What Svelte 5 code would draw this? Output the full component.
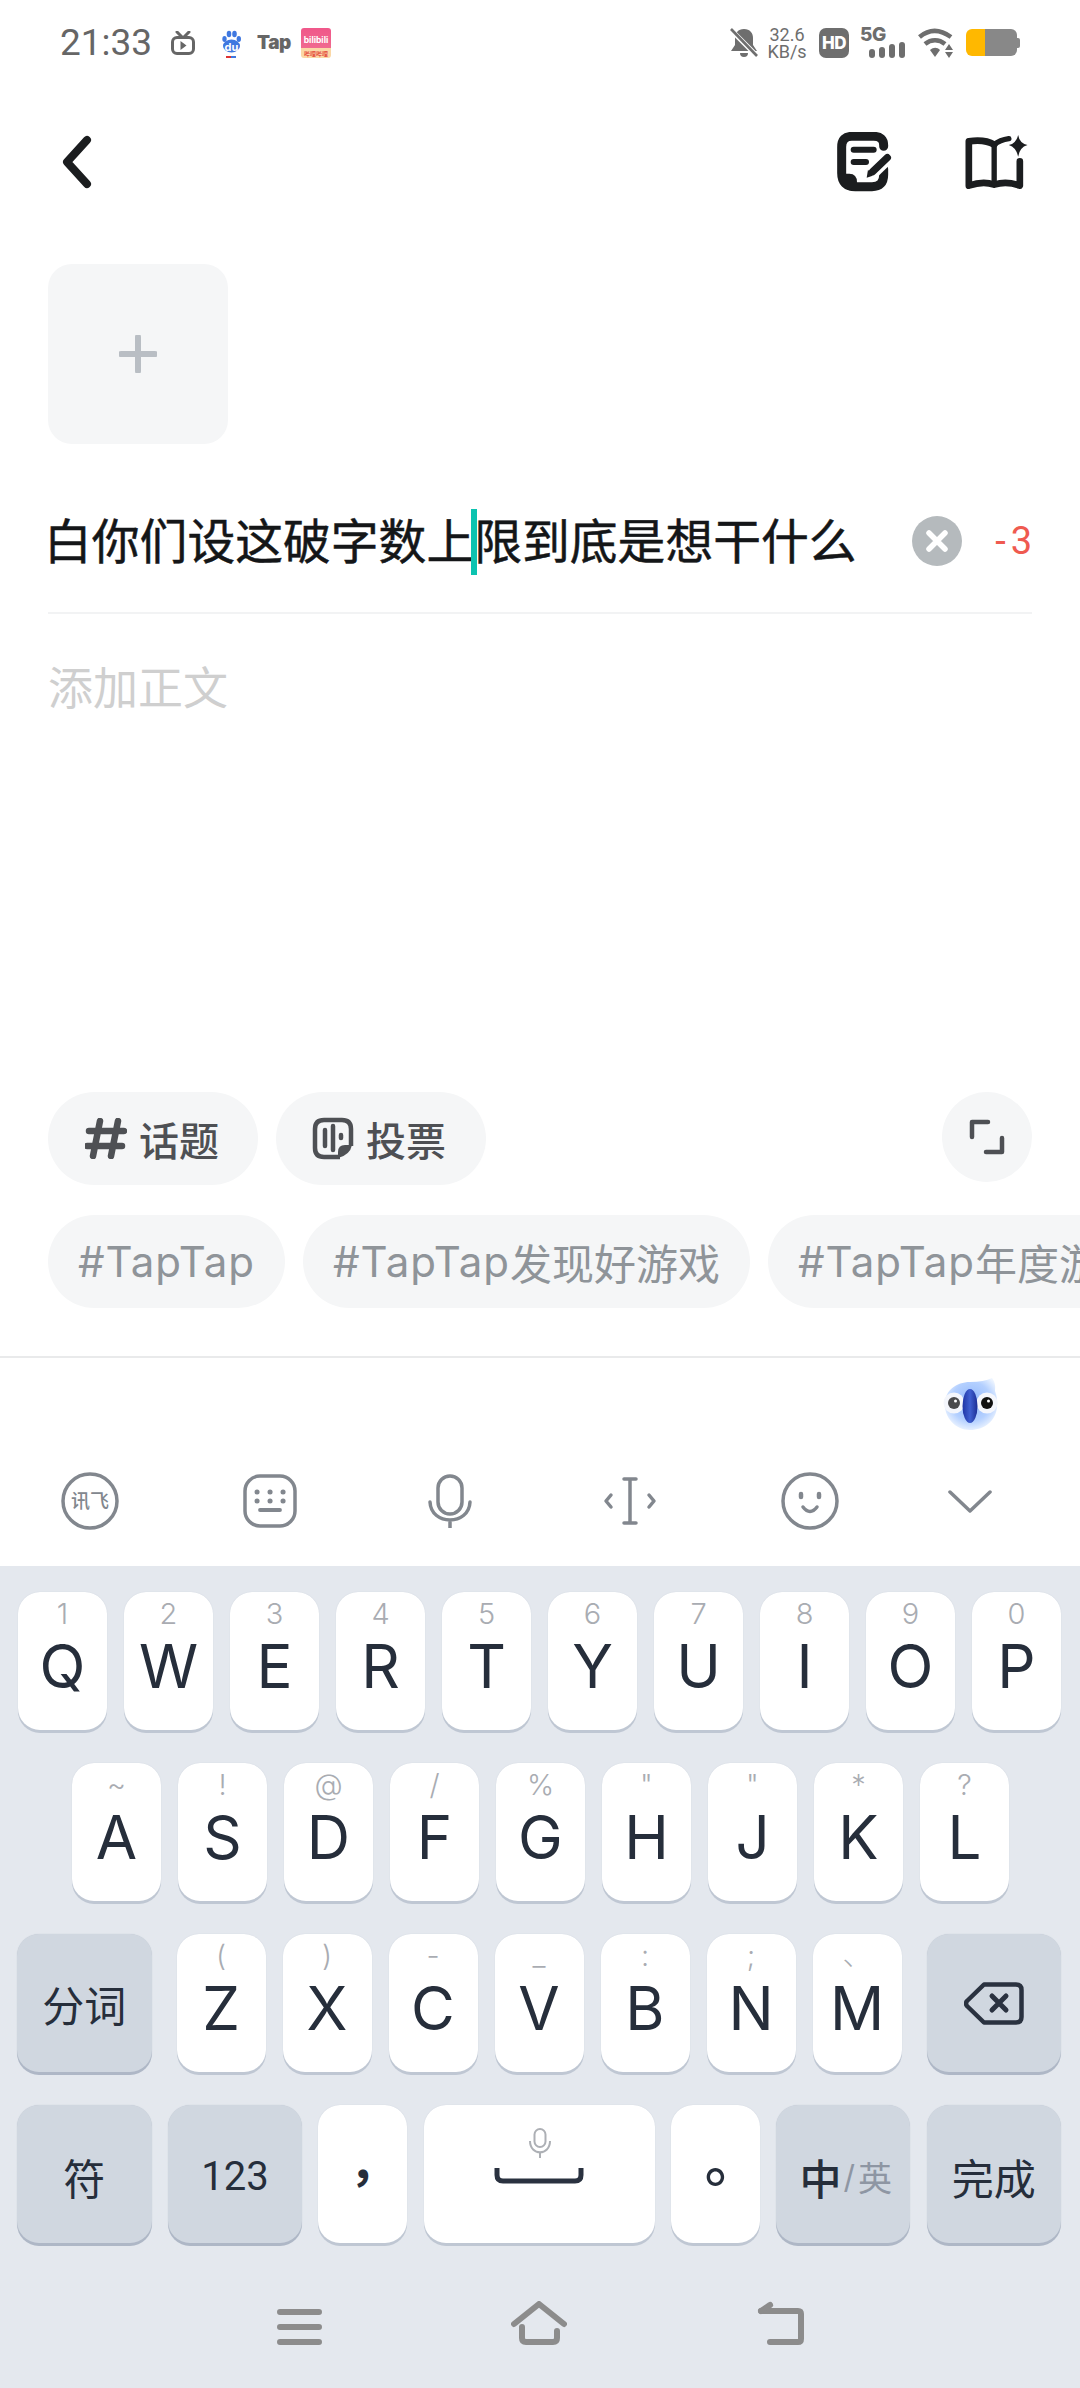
<script>
  const row1 = [['Q','1'],['W','2'],['E','3'],['R','4'],['T','5'],['Y','6'],['U','7'],['I','8'],['O','9'],['P','0']];
  const row2 = [['A','~'],['S','!'],['D','@'],['F','/'],['G','%'],['H','"'],['J','"'],['K','*'],['L','?']];
  const row3 = [['Z','('],['X',')'],['C','-'],['V','_'],['B',':'],['N',';'],['M','、']];
  const tags = ['', '发现好游戏', '年度游戏'];
</script>

<div class="page">
  <div class="status">
    <span class="time">21:33</span>
    <svg class="s-tv" viewBox="0 0 24 24" width="24" height="24">
      <path d="M6 1l5 5M18 1l-5 5" stroke="#666" stroke-width="3" stroke-linecap="round"/>
      <rect x="1.5" y="6.5" width="21" height="16" rx="4.5" fill="none" stroke="#666" stroke-width="3"/>
      <path d="M9.5 10l6 4.5-6 4.5z" fill="#666"/>
    </svg>
    <span class="s-baidu">
      <svg viewBox="0 0 19 28" width="19" height="28">
        <ellipse cx="9.5" cy="16" rx="8.5" ry="6.5" fill="#3f78e0"/>
        <ellipse cx="2.5" cy="9" rx="2.2" ry="3" fill="#3f78e0"/>
        <ellipse cx="7" cy="4" rx="2.3" ry="3.2" fill="#3f78e0"/>
        <ellipse cx="12.5" cy="4" rx="2.3" ry="3.2" fill="#3f78e0"/>
        <ellipse cx="16.8" cy="9" rx="2.2" ry="3" fill="#3f78e0"/>
        <rect x="4" y="26" width="5" height="2" fill="#d33"/>
        <rect x="9" y="26" width="5" height="2" fill="#3f78e0"/>
      </svg>
      <span class="du">du</span>
    </span>
    <span class="s-tap">Tap</span>
    <span class="s-bili"><span class="bili-t">bilibili</span><span class="bili-b">哔哩哔哩</span></span>
    <span class="grow"></span>
    <svg class="s-bell" viewBox="0 0 28 30" width="28" height="30">
      <path d="M14 1c-6 0-9 4-9 9v7l-4 6h26l-4-6v-7c0-5-3-9-9-9zM10 25a4 4 0 0 0 8 0z" fill="#6e6e6e"/>
      <path d="M0 1L28 29" stroke="#fff" stroke-width="5"/>
      <path d="M1 1L27 28" stroke="#6e6e6e" stroke-width="2.6"/>
    </svg>
    <span class="speed"><span>32.6</span><span>KB/s</span></span>
    <span class="hd">HD</span>
    <span class="net">
      <span class="fiveg">5G</span>
      <svg viewBox="0 0 36 16" width="36" height="16">
        <rect x="0" y="7" width="6" height="9" rx="3" fill="#6e6e6e"/>
        <rect x="10" y="5" width="6" height="11" rx="3" fill="#6e6e6e"/>
        <rect x="20" y="2" width="6" height="14" rx="3" fill="#6e6e6e"/>
        <rect x="30" y="0" width="6" height="16" rx="3" fill="#6e6e6e"/>
      </svg>
    </span>
    <svg class="s-wifi" viewBox="0 0 37 30" width="37" height="30">
      <path d="M1.5 9C11 1 22 1 33 9" fill="none" stroke="#6e6e6e" stroke-width="4.5"/>
      <path d="M7 16c6-5 14-5 20 0" fill="none" stroke="#6e6e6e" stroke-width="4.5"/>
      <path d="M12 22c3.500-3 7-3 10 0l-5 7z" fill="#6e6e6e"/>
      <path d="M27 22h8l-4-6zM27 24h8l-4 6z" fill="#6e6e6e"/>
    </svg>
    <span class="batt"><span class="batt-fill"></span><span class="batt-rest"></span><span class="batt-nub"></span></span>
  </div>

  <div class="nav">
    <svg viewBox="0 0 30 54" width="30" height="54">
      <path d="M25 5L5 27L25 49" fill="none" stroke="#1b1d1f" stroke-width="8" stroke-linecap="round" stroke-linejoin="round"/>
    </svg>
    <span class="grow"></span>
    <svg viewBox="595 397 165 180" width="55" height="60">
      <path d="M735 440V437Q735 410 705 410H640Q609 410 609 442V520Q609 561 650 561H700Q735 561 735 525V508" fill="none" stroke="#1b1d1f" stroke-width="27" stroke-linecap="round"/>
      <path d="M600 522H632Q655 522 655 548V572H632Q600 560 600 525z" fill="#1b1d1f"/>
      <path d="M645 450H705M645 487H682" stroke="#1b1d1f" stroke-width="18" stroke-linecap="round"/>
      <path d="M748 472L700 518" stroke="#fff" stroke-width="42"/>
      <path d="M746 474L702 516" stroke="#1b1d1f" stroke-width="22" stroke-linecap="round"/>
      <path d="M688 510l14 18-18 6z" fill="#1b1d1f"/>
    </svg>
    <svg class="book" viewBox="982 403 186 165" width="63" height="55">
      <path d="M1068 432Q1040 415 992 422V555Q1035 540 1068 552Q1105 540 1145 555V482" fill="none" stroke="#1b1d1f" stroke-width="20" stroke-linejoin="round" stroke-linecap="round"/>
      <path d="M1068 432V550M1068 432Q1085 418 1112 414" fill="none" stroke="#1b1d1f" stroke-width="16" stroke-linecap="round"/>
      <path d="M1140 403Q1144 428 1168 433Q1144 440 1140 468Q1134 440 1112 433Q1134 428 1140 403z" fill="#1b1d1f"/>
    </svg>
  </div>

  <div class="add">
    <svg viewBox="0 0 38 38" width="38" height="38"><path d="M19 2V36M2 19H36" stroke="#b9bec4" stroke-width="6" stroke-linecap="round"/></svg>
  </div>

  <div class="title-row">
    <span class="title">白你们设这破字数上<span class="caret"></span>限到底是想干什么</span>
    <span class="grow"></span>
    <svg class="clear" viewBox="0 0 50 50" width="50" height="50">
      <circle cx="25" cy="25" r="25" fill="#b5babd"/>
      <path d="M17 17L33 33M33 17L17 33" stroke="#fff" stroke-width="5.500" stroke-linecap="round"/>
    </svg>
    <span class="count">-3</span>
  </div>

  <div class="placeholder">添加正文</div>
  <div class="grow"></div>

  <div class="pills">
    <span class="pill p1">
      <svg viewBox="0 0 42 41" width="42" height="41"><path d="M15 3L8 38M33 3L26 38M4 13H39M2 28H37" stroke="#4e5054" stroke-width="6.500" stroke-linecap="round"/></svg>
      话题
    </span>
    <span class="pill p2">
      <svg viewBox="0 0 42 43" width="42" height="43">
        <path d="M28 40H12Q3 40 3 31V12Q3 3 12 3H30Q39 3 39 12V29" fill="none" stroke="#4e5054" stroke-width="4.500"/>
        <path d="M26 41V35Q26 28 33 28H40Q38 38 26 41z" fill="#4e5054"/>
        <path d="M13 13V29M21 9V33M29 18V21" stroke="#4e5054" stroke-width="4.500" stroke-linecap="round"/>
      </svg>
      投票
    </span>
    <span class="grow"></span>
    <span class="expand">
      <svg viewBox="0 0 36 36" width="36" height="36">
        <path d="M3 18V3H19M33 19V33H17" fill="none" stroke="#4e5054" stroke-width="4.500" stroke-linecap="round" stroke-linejoin="round"/>
      </svg>
    </span>
  </div>

  <div class="tags">
    {#each tags as t}<span class="tag"><span class="lat">#TapTap</span>{t}</span>{/each}
  </div>

  <div class="toolbar">
    <svg class="bird" viewBox="0 0 56 54" width="56" height="54">
      <defs>
        <radialGradient id="bd" cx="50%" cy="45%" r="58%"><stop offset="0" stop-color="#8fb6fb"/><stop offset="0.65" stop-color="#b4d0ff"/><stop offset="1" stop-color="#eef5ff"/></radialGradient>
        <linearGradient id="bk" x1="0" x2="1" y1="0" y2="0"><stop offset="0" stop-color="#1f35a5"/><stop offset="0.5" stop-color="#3f5fd0"/><stop offset="1" stop-color="#1c2e95"/></linearGradient>
      </defs>
      <path d="M3 26C3 14 14 5 28 5Q42 5 50 1Q54 6 53 14Q56 22 55 30C54 44 42 53 28 53C13 53 2 40 3 26z" fill="url(#bd)"/>
      <circle cx="12" cy="26" r="10.500" fill="#f4f6fc"/>
      <circle cx="45" cy="26" r="10.500" fill="#f4f6fc"/>
      <circle cx="12" cy="26" r="6" fill="#4a4a4c"/>
      <circle cx="45" cy="26" r="6" fill="#111"/>
      <circle cx="13.500" cy="24" r="1.500" fill="#fff"/>
      <circle cx="46.500" cy="24" r="1.500" fill="#fff"/>
      <ellipse cx="28" cy="29" rx="7.500" ry="17" fill="url(#bk)"/>
    </svg>
    <div class="tool-row">
      <span class="tool">
        <svg viewBox="0 0 58 58" width="58" height="58"><circle cx="29" cy="29" r="27" fill="none" stroke="#82878e" stroke-width="3.500"/></svg>
        <span class="xf">讯飞</span>
      </span>
      <span class="tool">
        <svg viewBox="0 0 54 54" width="54" height="54">
          <rect x="2" y="2" width="50" height="50" rx="15" fill="none" stroke="#82878e" stroke-width="3.500"/>
          <path d="M14 18h.1M27 18h.1M40 18h.1M14 27h.1M27 27h.1M40 27h.1" stroke="#82878e" stroke-width="5" stroke-linecap="round"/>
          <path d="M17 36H37" stroke="#82878e" stroke-width="3.800" stroke-linecap="round"/>
        </svg>
      </span>
      <span class="tool">
        <svg viewBox="0 0 44 54" width="44" height="54">
          <rect x="10" y="2" width="24" height="38" rx="12" fill="none" stroke="#82878e" stroke-width="3.500"/>
          <path d="M2 28C3 52 41 52 42 28M22 47V54" fill="none" stroke="#82878e" stroke-width="3.500" stroke-linecap="round"/>
        </svg>
      </span>
      <span class="tool">
        <svg viewBox="0 0 54 48" width="54" height="48">
          <path d="M21 2H33M21 46H33M27 2V46" fill="none" stroke="#82878e" stroke-width="3.500" stroke-linecap="round"/>
          <path d="M8 18L3 24L8 30M46 18L51 24L46 30" fill="none" stroke="#82878e" stroke-width="3.500" stroke-linecap="round" stroke-linejoin="round"/>
        </svg>
      </span>
      <span class="tool">
        <svg viewBox="0 0 58 58" width="58" height="58">
          <circle cx="29" cy="29" r="27" fill="none" stroke="#82878e" stroke-width="3.500"/>
          <path d="M20 22V25M38 22V25" stroke="#82878e" stroke-width="4.500" stroke-linecap="round"/>
          <path d="M22 35Q29 44 36 35" fill="none" stroke="#82878e" stroke-width="3.500" stroke-linecap="round"/>
        </svg>
      </span>
      <span class="tool shift">
        <svg viewBox="0 0 44 25" width="44" height="25"><path d="M2 3L22 22L42 3" fill="none" stroke="#82878e" stroke-width="3.500" stroke-linecap="round" stroke-linejoin="round"/></svg>
      </span>
    </div>
  </div>

  <div class="kb">
    <div class="row r1">
      {#each row1 as [l, h]}
        <div class="key"><span class="hint">{h}</span><span class="letter">{l}</span></div>
      {/each}
    </div>
    <div class="row r2">
      {#each row2 as [l, h]}
        <div class="key"><span class="hint">{h}</span><span class="letter">{l}</span></div>
      {/each}
    </div>
    <div class="row r3">
      <div class="key fn"><span>分词</span></div>
      {#each row3 as [l, h], i}
        <div class="key" class:first={i === 0}><span class="hint">{h}</span><span class="letter">{l}</span></div>
      {/each}
      <div class="key fn del">
        <svg viewBox="0 0 60 43" width="60" height="43">
          <path d="M20 2.500H52Q57.500 2.500 57.500 8V35Q57.500 40.500 52 40.500H20L3 24Q1 21.500 3 19z" fill="none" stroke="#2a3240" stroke-width="4.500" stroke-linejoin="round"/>
          <path d="M28 14L42 28M42 14L28 28" stroke="#2a3240" stroke-width="5" stroke-linecap="round"/>
        </svg>
      </div>
    </div>
    <div class="row r4">
      <div class="key fn low"><span>符</span></div>
      <div class="key fn low"><span class="num">123</span></div>
      <div class="key"><span class="punct small">，</span></div>
      <div class="key space">
        <svg class="sp-mic" viewBox="0 0 22 30" width="22" height="30">
          <rect x="5.500" y="1" width="11" height="18" rx="5.500" fill="none" stroke="#adb0b5" stroke-width="2"/>
          <path d="M1 13C1 28 21 28 21 13M11 24V30" fill="none" stroke="#adb0b5" stroke-width="2"/>
        </svg>
        <svg class="sp-bar" viewBox="0 0 90 16" width="90" height="16">
          <path d="M3 0V7Q3 13 9 13H81Q87 13 87 7V0" fill="none" stroke="#2a3240" stroke-width="5" stroke-linecap="round"/>
        </svg>
      </div>
      <div class="key"><span class="punct">。</span></div>
      <div class="key fn low zhen"><span class="zh">中</span><span class="slash">/</span><span class="en">英</span></div>
      <div class="key fn low"><span>完成</span></div>
    </div>
    <div class="sysnav">
      <svg viewBox="0 0 45 36" width="45" height="36">
        <path d="M3 3H42M3 18H42M3 33H42" stroke="#8c8c8c" stroke-width="6" stroke-linecap="round"/>
      </svg>
      <svg viewBox="0 0 56 44" width="56" height="44">
        <path d="M3 23L28 3L53 23" fill="none" stroke="#8c8c8c" stroke-width="6" stroke-linecap="round" stroke-linejoin="round"/>
        <path d="M11 26V37Q11 41 15 41H42Q46 41 46 37V30" fill="none" stroke="#8c8c8c" stroke-width="6" stroke-linecap="round"/>
      </svg>
      <svg viewBox="0 0 48 44" width="48" height="44">
        <path d="M5 10H42Q45 10 45 13V38Q45 41 42 41H14" fill="none" stroke="#8c8c8c" stroke-width="6" stroke-linecap="round"/>
        <path d="M5 10L14 4" stroke="#8c8c8c" stroke-width="6" stroke-linecap="round"/>
      </svg>
    </div>
  </div>
</div>

<style>
  :global(body) { margin: 0; background: #fff; }
  .page {
    width: 1080px; height: 2388px; overflow: hidden; display: flex; flex-direction: column;
    font-family: Inter, "Noto Sans CJK SC", sans-serif; background: #fff; position: relative;
  }
  .grow { flex: 1; }

  /* status bar */
  .status { height: 85px; display: flex; align-items: center; padding: 0 60px 0 60px; box-sizing: border-box; color: #666; flex-shrink: 0; }
  .time { font-family: Roboto, sans-serif; font-size: 37px; margin-top: -1px; width: 111px; }
  .s-tv { margin-right: 27px; }
  .s-baidu { position: relative; width: 19px; height: 28px; margin-right: 16px; margin-top: 2px; display: block; }
  .s-baidu svg { display: block; }
  .du { position: absolute; left: 0; right: 0; top: 11px; text-align: center; color: #fff; font-size: 11px; font-weight: 700; line-height: 12px; }
  .s-tap { font-size: 19px; font-weight: 900; width: 44px; color: #666; letter-spacing: -0.5px; }
  .s-bili {
    width: 30px; height: 30px; border-radius: 3px; overflow: hidden; display: flex; flex-direction: column;
    background: linear-gradient(#f0578a, #f06a8f 65%, #fbd8a6 68%);
    align-items: center; justify-content: space-between;
  }
  .bili-t { color: #fff; font-size: 8.5px; font-weight: 700; margin-top: 7px; line-height: 10px; }
  .bili-b { color: #d22; font-size: 6px; line-height: 8px; }
  .s-bell { margin-right: 9px; }
  .speed { display: flex; flex-direction: column; align-items: center; font-family: Roboto, sans-serif; font-size: 18px; line-height: 17px; color: #6e6e6e; width: 40px; margin-right: 12px; }
  .hd { width: 30px; height: 30px; background: #6e6e6e; border-radius: 7px; color: #fff; font-size: 17px; font-weight: 800; display: flex; align-items: center; justify-content: center; margin-right: 11px; letter-spacing: -0.5px; }
  .net { width: 45px; height: 30px; position: relative; display: block; margin-right: 13px; }
  .fiveg { position: absolute; left: 0; top: -2px; font-size: 19px; line-height: 18px; font-weight: 800; color: #6e6e6e; letter-spacing: -0.5px; }
  .net svg { position: absolute; right: 0; top: 14px; }
  .s-wifi { margin-right: 11px; }
  .batt { width: 54px; height: 27px; display: flex; position: relative; }
  .batt-fill { width: 19px; background: #ffb800; border-radius: 6px 0 0 6px; }
  .batt-rest { width: 32px; background: #888; border-radius: 0 6px 6px 0; }
  .batt-nub { width: 3px; height: 10px; background: #888; align-self: center; border-radius: 0 2px 2px 0; }

  /* nav */
  .nav { height: 154px; display: flex; align-items: center; padding: 0 52px 0 62px; box-sizing: border-box; flex-shrink: 0; }
  .book { margin-left: 73px; }

  .add { width: 180px; height: 180px; margin: 25px 0 0 48px; background: #f5f6f7; border-radius: 24px; display: flex; align-items: center; justify-content: center; flex-shrink: 0; }

  .title-row { margin: 0 48px 0 44px; height: 170px; padding: 26px 0 0 0; box-sizing: border-box; display: flex; align-items: center; border-bottom: 2px solid transparent; flex-shrink: 0; position: relative; }
  .title-row::after { content: ""; position: absolute; left: 4px; right: 0; bottom: -2px; height: 2px; background: #f2f3f4; }
  .title { font-size: 47.8px; font-weight: 400; color: #141618; -webkit-text-stroke: 0.5px #141618; white-space: nowrap; position: relative; line-height: 64px; padding-top: 3px; }
  .caret { display: inline-block; width: 6px; height: 66px; background: #0cc3b0; vertical-align: middle; margin: -8px -3px 0 -3px; }
  .clear { margin-right: 31px; flex-shrink: 0; }
  .count { color: #ef5a50; font-size: 38px; font-family: Roboto, sans-serif; width: 44px; text-align: right; letter-spacing: 5px; margin-right: -5px; }

  .placeholder { margin: 45px 0 0 48px; font-size: 45px; line-height: 60px; color: #cfcfcf; }

  .pills { display: flex; align-items: flex-start; padding: 0 48px; flex-shrink: 0; }
  .pill { height: 93px; background: #f5f6f7; border-radius: 47px; display: flex; align-items: center; gap: 12px; font-size: 40px; font-weight: 500; color: #4e5054; box-sizing: border-box; padding-left: 37px; width: 210px; }
  .p2 { margin-left: 18px; padding-left: 36px; }
  .expand { width: 90px; height: 90px; border-radius: 50%; background: #f5f6f7; display: flex; align-items: center; justify-content: center; }

  .tags { display: flex; gap: 18px; margin-top: 30px; padding-left: 48px; overflow: hidden; flex-shrink: 0; }
  .tag { height: 93px; border-radius: 47px; background: #f5f6f7; color: #8f9499; font-size: 42px; display: flex; align-items: center; padding: 0 30px; white-space: nowrap; flex-shrink: 0; }
  .lat { letter-spacing: 1px; }

  .toolbar { height: 210px; margin-top: 48px; border-top: 2px solid #e9eaeb; box-sizing: border-box; position: relative; flex-shrink: 0; padding-top: 114px; }
  .bird { position: absolute; left: 942px; top: 19px; }
  .tool-row { display: grid; grid-template-columns: repeat(6, 180px); height: 58px; align-items: center; justify-items: center; }
  .tool { position: relative; display: flex; align-items: center; justify-content: center; }
  .shift { margin-left: -40px; }
  .xf { position: absolute; left: 0; right: 0; top: 0; bottom: 0; display: flex; align-items: center; justify-content: center; font-size: 19px; line-height: 1; color: #82878e; font-weight: 500; }

  /* keyboard */
  .kb { height: 822px; flex-shrink: 0; background: #e4e8ee; padding-top: 26px; box-sizing: border-box; }
  .row { display: flex; height: 138px; margin-bottom: 33px; }
  .r1 { padding-left: 18px; gap: 17px; }
  .r2 { padding-left: 72px; gap: 17px; }
  .r3 { padding-left: 17px; gap: 17px; }
  .r4 { padding-left: 17px; gap: 16.200px; }
  .key {
    width: 89px; height: 138px; background: #fff; border-radius: 22px; box-shadow: 0 3px 0 #bfc7d3, 0 0 1px #c3cad6;
    display: flex; flex-direction: column; align-items: center; box-sizing: border-box; color: #262e3b; position: relative; flex-shrink: 0;
  }
  .first { margin-left: 8px; }
  .hint { font-size: 29px; font-weight: 300; color: #a9acb2; line-height: 34px; margin-top: 5px; height: 34px; }
  .letter { font-size: 60px; line-height: 70px; font-weight: 400; }
  .fn {
    width: 134.500px; background: #d0d7e0; box-shadow: 0 3px 0 #aeb7c6, 0 0 1px #b9c1cd;
    justify-content: center; align-items: center; flex-direction: row; font-size: 42px;
  }
  .low { padding-top: 4px; }
  .zhen { padding-left: 5px; }
  .del { margin-left: 8px; }
  .num { font-size: 40px; font-family: Roboto, sans-serif; }
  .punct { font-family: "Noto Sans CJK TC", sans-serif; font-size: 56px; line-height: 138px; font-weight: 500; }
  .small { font-size: 48px; font-weight: 700; }
  .space { width: 231px; }
  .sp-mic { position: absolute; left: 105px; top: 23px; }
  .sp-bar { position: absolute; left: 70px; top: 63px; }
  .zh { font-size: 42px; font-weight: 500; }
  .slash { font-size: 32px; color: #8e96a3; margin: 0 3px 0 2px; }
  .en { font-size: 34px; color: #8e96a3; }

  .sysnav { display: flex; justify-content: center; align-items: flex-end; gap: 189px; padding-top: 25px; }
</style>
